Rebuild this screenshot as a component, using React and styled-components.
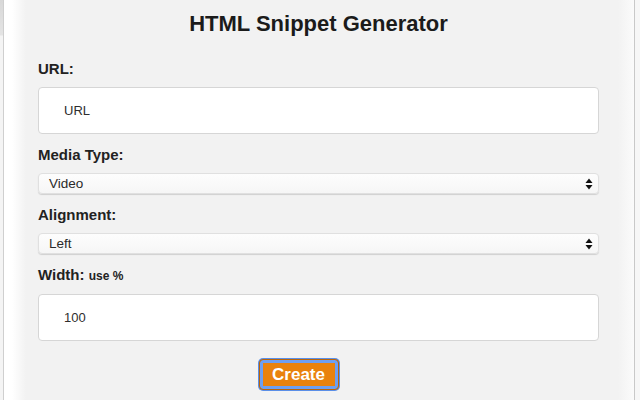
import React from "react";
import styled, { createGlobalStyle } from "styled-components";

const Global = createGlobalStyle`
  html, body { margin: 0; padding: 0; background: #ffffff; }
  body { font-family: "Liberation Sans", Arial, Helvetica, sans-serif; }
  * { box-sizing: border-box; }
`;

const Screen = styled.div`
  width: 640px;
  height: 400px;
  display: flex;
  overflow: hidden;
  background: #ffffff;
`;

const LeftRail = styled.div`
  width: 4px;
  flex: none;
  border-right: 1px solid #cfcfcf;
  background: linear-gradient(to bottom, #d8d8d8 0, #e4e4e4 35px, #f4f4f4 36px, #f4f4f4 100%);
`;

const RightRail = styled.div`
  width: 6px;
  flex: none;
  border-left: 1px solid #c9c9c9;
  background: #f7f7f7;
`;

const Panel = styled.main`
  flex: 1;
  display: flex;
  flex-direction: column;
  padding: 10px 35px 0 34px;
  background: linear-gradient(
    to right,
    #ffffff 0,
    #ffffff 8px,
    #f2f2f2 22px,
    #f2f2f2 calc(100% - 16px),
    #fbfbfb 100%
  );
`;

const Title = styled.h1`
  margin: 0 0 22px;
  font-size: 22px;
  line-height: 28px;
  font-weight: 700;
  color: #1b1b1b;
  text-align: center;
`;

const Form = styled.div`
  display: flex;
  flex-direction: column;
  gap: 12px;
`;

const Field = styled.div`
  display: flex;
  flex-direction: column;
  gap: 9px;
`;

const Label = styled.label`
  font-size: 15px;
  line-height: 18px;
  font-weight: 700;
  color: #222222;
`;

const Hint = styled.span`
  font-size: 12px;
  font-weight: 700;
  color: #222222;
`;

const TextInput = styled.div`
  height: 47px;
  display: flex;
  align-items: center;
  padding-left: 25px;
  background: #ffffff;
  border: 1px solid #d6d6d6;
  border-radius: 4px;
  font-size: 13px;
  color: #2e2e2e;
`;

const SelectBox = styled.div`
  position: relative;
  height: 21px;
  display: flex;
  align-items: center;
  padding-left: 10px;
  background: linear-gradient(to bottom, #fdfdfd, #f6f6f6);
  border: 1px solid #e0e0e0;
  border-radius: 4px;
  box-shadow: 0 1px 1px rgba(0, 0, 0, 0.14);
  font-size: 13.5px;
  color: #2a2a2a;
`;

const Arrows = styled.svg`
  position: absolute;
  right: 5px;
  top: 50%;
  transform: translateY(-50%);
`;

const ButtonRow = styled.div`
  display: flex;
  justify-content: center;
  padding: 18px 40px 0 0;
`;

const Button = styled.button`
  height: 31px;
  width: 80px;
  padding: 0;
  border: 1px solid #b9640a;
  border-radius: 4px;
  background: #e9820d;
  color: #ffffff;
  font-family: "Liberation Sans", Arial, sans-serif;
  font-size: 17px;
  font-weight: 700;
  box-shadow: 0 0 0 3px #6d9ff2 inset, 0 0 0 1px #5a8fe8;
  outline: none;
  cursor: pointer;
`;

const SelectArrows = () => (
  <Arrows width="8" height="12" viewBox="0 0 8 12">
    <path d="M4 0.5 L7.5 5 L0.5 5 Z" fill="#111" />
    <path d="M4 11.5 L7.5 7 L0.5 7 Z" fill="#111" />
  </Arrows>
);

export default function App() {
  return (
    <>
      <Global />
      <Screen>
        <LeftRail />
        <Panel>
          <Title>HTML Snippet Generator</Title>
          <Form>
            <Field>
              <Label>URL:</Label>
              <TextInput>URL</TextInput>
            </Field>
            <Field>
              <Label>Media Type:</Label>
              <SelectBox>
                Video
                <SelectArrows />
              </SelectBox>
            </Field>
            <Field>
              <Label>Alignment:</Label>
              <SelectBox>
                Left
                <SelectArrows />
              </SelectBox>
            </Field>
            <Field>
              <Label>
                Width: <Hint>use %</Hint>
              </Label>
              <TextInput>100</TextInput>
            </Field>
          </Form>
          <ButtonRow>
            <Button>Create</Button>
          </ButtonRow>
        </Panel>
        <RightRail />
      </Screen>
    </>
  );
}
